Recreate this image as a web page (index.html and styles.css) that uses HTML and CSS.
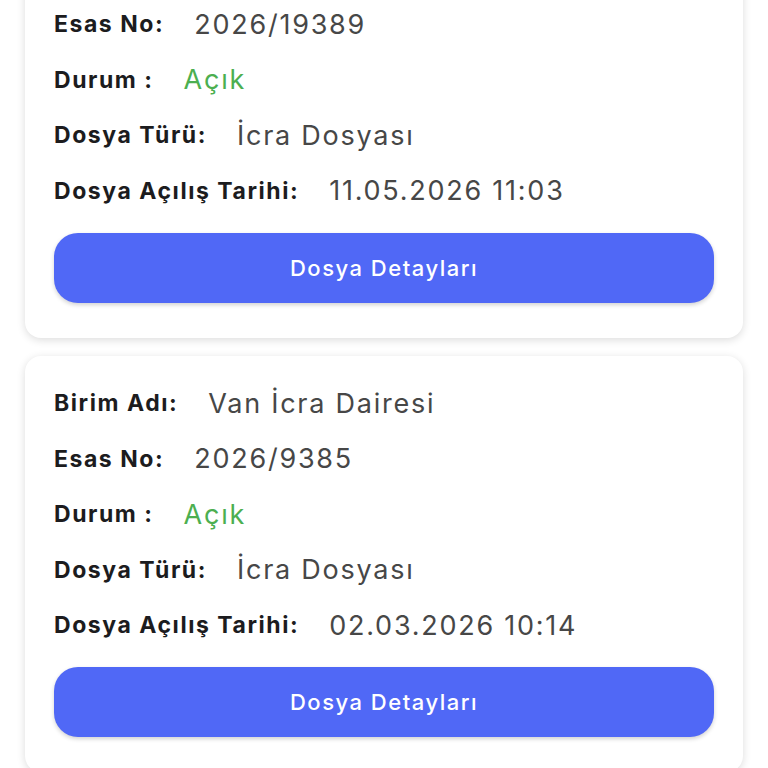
FILE: index.html
```html
<!DOCTYPE html>
<html lang="tr">
<head>
    <meta charset="UTF-8">
    <meta name="viewport" content="width=device-width, initial-scale=1.0">
    <title>Dosyalarım</title>
    <link rel="stylesheet" href="styles.css">
</head>
<body>
    <div class="list">
        <div class="card">
            <div class="row"><span class="label">Birim Adı:</span><span class="value">Van İcra Dairesi</span></div>
            <div class="row"><span class="label">Esas No:</span><span class="value">2026/19389</span></div>
            <div class="row"><span class="label">Durum :</span><span class="value open">Açık</span></div>
            <div class="row"><span class="label">Dosya Türü:</span><span class="value">İcra Dosyası</span></div>
            <div class="row"><span class="label">Dosya Açılış Tarihi:</span><span class="value">11.05.2026 11:03</span></div>
            <button class="detail-btn">Dosya Detayları</button>
        </div>

        <div class="card">
            <div class="row"><span class="label">Birim Adı:</span><span class="value">Van İcra Dairesi</span></div>
            <div class="row"><span class="label">Esas No:</span><span class="value">2026/9385</span></div>
            <div class="row"><span class="label">Durum :</span><span class="value open">Açık</span></div>
            <div class="row"><span class="label">Dosya Türü:</span><span class="value">İcra Dosyası</span></div>
            <div class="row"><span class="label">Dosya Açılış Tarihi:</span><span class="value">02.03.2026 10:14</span></div>
            <button class="detail-btn">Dosya Detayları</button>
        </div>
    </div>
</body>
</html>
```

FILE: styles.css
```css
body {
    margin: 0;
    background: #ffffff;
    font-family: Inter, "Noto Sans", sans-serif;
    overflow: hidden;
}
.list {
    display: flex;
    flex-direction: column;
    gap: 18px;
    padding: 0 25px;
    margin-top: -79px;
}
.card {
    background: #ffffff;
    border-radius: 16px;
    box-shadow: 0 2px 8px rgba(0, 0, 0, 0.14);
    padding: 20px 29px 35px 29px;
}
.row {
    display: flex;
    align-items: center;
    gap: 30px;
    height: 55.5px;
}
.label {
    font-size: 23px;
    font-weight: 700;
    letter-spacing: 1.55px;
    color: #1c1c1e;
}
.value {
    font-size: 27px;
    font-weight: 400;
    color: #474747;
    letter-spacing: 1.75px;
}
.value.open {
    color: #4caf50;
}
.detail-btn {
    display: block;
    width: 100%;
    height: 70px;
    margin-top: 14px;
    border: none;
    border-radius: 24px;
    background: #5068f6;
    color: #ffffff;
    font-family: Inter, "Noto Sans", sans-serif;
    font-size: 22px;
    font-weight: 500;
    letter-spacing: 1.5px;
    box-shadow: 0 2px 4px rgba(0, 0, 0, 0.18);
    cursor: pointer;
}
```
